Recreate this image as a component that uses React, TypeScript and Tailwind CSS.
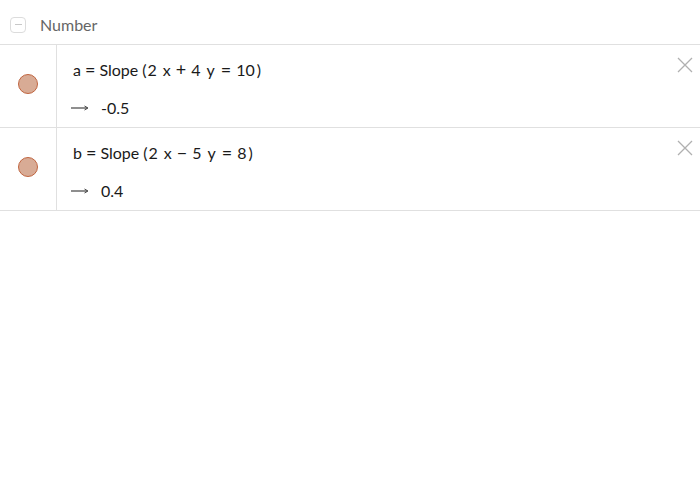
import React from "react";

const OPS = new Set(["=", "+", "−"]);

const Row = ({ tokens, value }: { tokens: [string, string][]; value: string }) => (
  <div className="flex h-[83px] border-b border-[#e0e0e0]">
    <div className="w-[57px] shrink-0 border-r border-[#e0e0e0] flex justify-center pt-[29px]">
      <div className="w-[20px] h-[20px] rounded-full bg-[#d8ab95] border border-[#c06540]" />
    </div>
    <div className="flex-1 relative pl-[16px]">
      <div className="pt-[13px] h-[35px] flex items-baseline text-[16px] text-[#1a1a1a] leading-[22px]">
        {tokens.map(([t, ml], i) => (
          <span key={i} className={OPS.has(t) ? ml + " text-[18px]" : ml}>
            {t}
          </span>
        ))}
      </div>
      <div className="mt-[17px] flex items-center text-[16px] text-[#1a1a1a] leading-[22px]">
        <svg width="18" height="6" viewBox="0 0 18 6" className="-ml-[2px] mr-[12px]">
          <line x1="0" y1="3" x2="16" y2="3" stroke="#444" strokeWidth="1.2" />
          <path d="M13.5 1 L17 3 L13.5 5" fill="none" stroke="#444" strokeWidth="1" />
        </svg>
        <span>{value}</span>
      </div>
      <svg width="16" height="16" viewBox="0 0 16 16" className="absolute right-[7px] top-[12px]">
        <path d="M1 1 L15 15 M15 1 L1 15" stroke="#b0b0b0" strokeWidth="1.3" />
      </svg>
    </div>
  </div>
);

export default function App() {
  return (
    <div className="w-[700px] h-[500px] bg-white" style={{ fontFamily: '"Lato", "DejaVu Sans", sans-serif' }}>
      <div className="h-[45px] border-b border-[#e0e0e0] flex items-center pt-[5px]">
        <div className="ml-[10px] w-[16px] h-[16px] rounded-[4px] border border-[#dcdcdc] flex items-center justify-center">
          <div className="w-[7px] h-[1.5px] bg-[#c8c8c8]" />
        </div>
        <span className="ml-[14px] text-[16px] text-[#666666]">Number</span>
      </div>
      <Row
        value="-0.5"
        tokens={[
          ["a", ""],
          ["=", "ml-[4px]"],
          ["Slope", "ml-[4px]"],
          ["(", "ml-[4px]"],
          ["2", "ml-[1px]"],
          ["x", "ml-[6px]"],
          ["+", "ml-[5px]"],
          ["4", "ml-[5px]"],
          ["y", "ml-[6px]"],
          ["=", "ml-[6px]"],
          ["10", "ml-[5px]"],
          [")", "ml-[2px]"],
        ]}
      />
      <Row
        value="0.4"
        tokens={[
          ["b", ""],
          ["=", "ml-[4px]"],
          ["Slope", "ml-[4px]"],
          ["(", "ml-[4px]"],
          ["2", "ml-[1px]"],
          ["x", "ml-[6px]"],
          ["−", "ml-[5px]"],
          ["5", "ml-[5px]"],
          ["y", "ml-[6px]"],
          ["=", "ml-[6px]"],
          ["8", "ml-[5px]"],
          [")", "ml-[2px]"],
        ]}
      />
    </div>
  );
}
